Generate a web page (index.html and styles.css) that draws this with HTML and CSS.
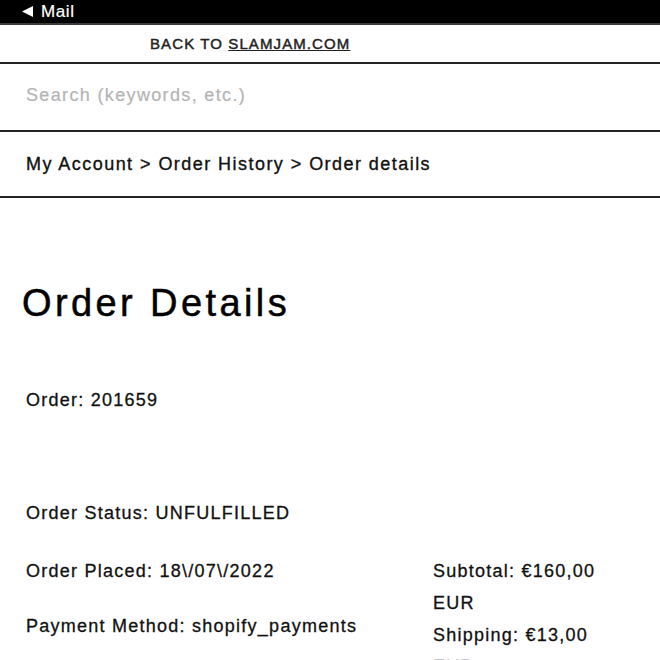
FILE: index.html
```html
<!DOCTYPE html>
<html>
    <head>
        <title>Order details</title>
        <meta charset="UTF-8">
        <link rel="stylesheet" href="styles.css">
    </head>
    <body>
        <div class="statusbar">
            <svg class="back_arrow" width="11" height="11" viewBox="0 0 11 11"><polygon points="0,5.5 11,0 11,11" fill="#fff"/></svg>
            <span>Mail</span>
        </div>
        <div class="topbar">
            BACK TO <a href="#">SLAMJAM.COM</a>
        </div>
        <div class="search">
            <input type="text" placeholder="Search (keywords, etc.)">
        </div>
        <div class="crumbs">
            My Account &gt; Order History &gt; Order details
        </div>
        <div class="content">
            <h1>Order Details</h1>
            <p class="order_no">Order: 201659</p>
            <p class="order_status">Order Status: UNFULFILLED</p>
            <div class="order_info">
                <div class="order_left">
                    <p>Order Placed: 18\/07\/2022</p>
                    <p class="payment">Payment Method: shopify_payments</p>
                </div>
                <div class="order_totals">
                    <p>Subtotal: €160,00 EUR</p>
                    <p>Shipping: €13,00 EUR</p>
                </div>
            </div>
        </div>
    </body>
</html>
```

FILE: styles.css
```css
html, body {
    margin: 0;
    padding: 0;
    overflow: hidden;
    background-color: white;
}
body {
    font-family: "Liberation Sans", Arial, sans-serif;
    color: #111;
}
p {
    margin: 0;
}
.statusbar {
    height: 23px;
    background-color: black;
    border-bottom: 2px solid #3c3c3c;
    color: white;
    display: flex;
    align-items: center;
    padding-left: 22px;
    font-size: 17px;
    letter-spacing: 0.6px;
    -webkit-text-stroke: 0.2px white;
}
.statusbar span {
    margin-top: 1px;
}
.back_arrow {
    margin-right: 8px;
}
.topbar {
    height: 37px;
    line-height: 37px;
    border-bottom: 2px solid #222;
    padding-left: 150px;
    font-size: 15px;
    letter-spacing: 1.1px;
    color: #222;
    -webkit-text-stroke: 0.45px #222;
}
.topbar a {
    color: #222;
    text-decoration: underline;
}
.search {
    height: 66px;
    border-bottom: 2px solid #222;
    display: flex;
    align-items: center;
    padding-left: 26px;
}
.search input {
    border: none;
    outline: none;
    width: 400px;
    padding: 0;
    font-family: "Liberation Sans", Arial, sans-serif;
    font-size: 18px;
    letter-spacing: 1.35px;
    margin-top: -3px;
    -webkit-text-stroke: 0.2px #b4b4b4;
}
.search input::placeholder {
    color: #b4b4b4;
}
.crumbs {
    height: 64px;
    line-height: 64px;
    border-bottom: 2px solid #222;
    padding-left: 26px;
    font-size: 18px;
    letter-spacing: 1.45px;
    -webkit-text-stroke: 0.35px #111;
}
.content {
    padding: 0 27px 0 26px;
    font-size: 18px;
    line-height: 24px;
    letter-spacing: 1.25px;
    -webkit-text-stroke: 0.3px #111;
}
.content h1 {
    margin: 83px 0 0 -4px;
    font-size: 38px;
    line-height: 44px;
    font-weight: normal;
    letter-spacing: 3.4px;
    color: black;
    -webkit-text-stroke: 0.5px black;
}
.order_no {
    margin-top: 63px;
}
.order_status {
    margin-top: 89px;
}
.order_info {
    margin-top: 30px;
    display: grid;
    grid-template-columns: 1fr 200px;
}
.order_left {
    padding-top: 4px;
}
.payment {
    margin-top: 31px;
}
.order_totals {
    line-height: 32px;
}
```
